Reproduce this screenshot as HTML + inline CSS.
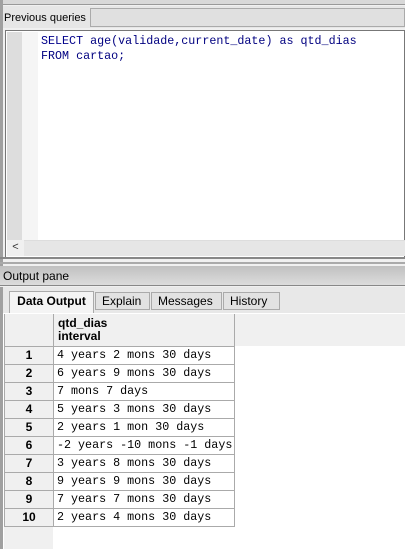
<!DOCTYPE html>
<html><head><style>
*{margin:0;padding:0;box-sizing:border-box}
body{width:405px;height:549px;background:#f0f0f0;position:relative;overflow:hidden;font-family:"Liberation Sans",sans-serif;font-size:12px}
.a{position:absolute}
.mono{font-family:"Liberation Mono",monospace;font-size:11.7px;white-space:pre}
</style></head><body>
<div class="a" style="left:0;top:0;width:405px;height:5px;background:#d8d8d8;border-bottom:1px solid #999"></div>
<div class="a" style="left:0;top:0;width:3px;height:270px;background:#a0a0a0"></div>
<div class="a" style="left:3px;top:6px;width:402px;height:22px;background:#e6e6e6"></div>
<div class="a" style="left:4px;top:10px;height:16px;line-height:16px;color:#000;font-size:11px;white-space:nowrap">Previous queries</div>
<div class="a" style="left:90px;top:8px;width:315px;height:19px;border:1px solid #aaa;background:#e0e0e0"></div>
<div class="a" style="left:5px;top:30px;width:400px;height:228px;border:1px solid #777;background:#fff"></div>
<div class="a" style="left:7px;top:32px;width:15px;height:208px;background:#ddd"></div>
<div class="a" style="left:22px;top:32px;width:16px;height:208px;background:#f5f5f5"></div>
<div class="a mono" style="left:41px;top:34px;line-height:15px;color:#000080"><span style="color:#00008b">SELECT</span> age(validade,current_date) as qtd_dias
FROM cartao;</div>
<div class="a" style="left:7px;top:240px;width:398px;height:16px;background:#e6e6e6;border-top:1px solid #ddd"></div>
<div class="a" style="left:7px;top:240px;width:17px;height:16px;background:#f0f0f0;text-align:center;line-height:15px;color:#333;font-size:11px">&lt;</div>
<div class="a" style="left:0;top:257px;width:405px;height:2px;background:#888"></div>
<div class="a" style="left:0;top:262px;width:405px;height:2px;background:#aaa"></div>
<div class="a" style="left:0;top:266px;width:405px;height:20px;background:linear-gradient(#c0c0c0,#dcdcdc);border-bottom:1px solid #888"></div>
<div class="a" style="left:3px;top:269px;line-height:15px">Output pane</div>
<div class="a" style="left:0;top:287px;width:3px;height:262px;background:#a0a0a0"></div>
<div class="a" style="left:3px;top:287px;width:402px;height:27px;background:#e8e8e8"></div>
<div class="a" style="left:9px;top:291px;width:85px;height:22px;background:#f4f4f4;border:1px solid #aaa;border-bottom:none;font-weight:bold;line-height:19px;text-align:center">Data Output</div>
<div class="a" style="left:95px;top:292px;width:55px;height:18px;background:#e2e2e2;border:1px solid #aaa;line-height:17px;padding-left:6px">Explain</div>
<div class="a" style="left:151px;top:292px;width:71px;height:18px;background:#e2e2e2;border:1px solid #aaa;line-height:17px;padding-left:6px">Messages</div>
<div class="a" style="left:223px;top:292px;width:57px;height:18px;background:#e2e2e2;border:1px solid #aaa;line-height:17px;padding-left:6px">History</div>
<div class="a" style="left:3px;top:313px;width:402px;height:236px;background:#fff"></div>
<div class="a" style="left:4px;top:314px;width:49px;height:235px;background:#f0f0f0"></div>
<div class="a" style="left:53px;top:314px;width:352px;height:32px;background:#f0f0f0"></div>
<div class="a" style="left:53px;top:314px;width:182px;height:33px;border:1px solid #aaa;border-top:none;padding:3px 0 0 4px;font-weight:bold;line-height:13px">qtd_dias<br>interval</div>
<div class="a" style="left:4px;top:314px;width:50px;height:33px;border:1px solid #aaa;border-top:none"></div>
<div id="rows"></div>
<script>
var d=["4 years 2 mons 30 days","6 years 9 mons 30 days","7 mons 7 days","5 years 3 mons 30 days","2 years 1 mon 30 days","-2 years -10 mons -1 days","3 years 8 mons 30 days","9 years 9 mons 30 days","7 years 7 mons 30 days","2 years 4 mons 30 days"],h="";
for(var i=0;i<10;i++){var t=346+i*18;
h+='<div class="a" style="left:4px;top:'+t+'px;width:50px;height:19px;border:1px solid #aaa;background:#f0f0f0;text-align:center;font-weight:bold;line-height:17px">'+(i+1)+'</div>';
h+='<div class="a mono" style="left:53px;top:'+t+'px;width:182px;height:19px;border:1px solid #aaa;background:#fff;line-height:17px;padding-left:3px">'+d[i]+'</div>';}
document.getElementById("rows").innerHTML=h;
</script>
</body></html>
